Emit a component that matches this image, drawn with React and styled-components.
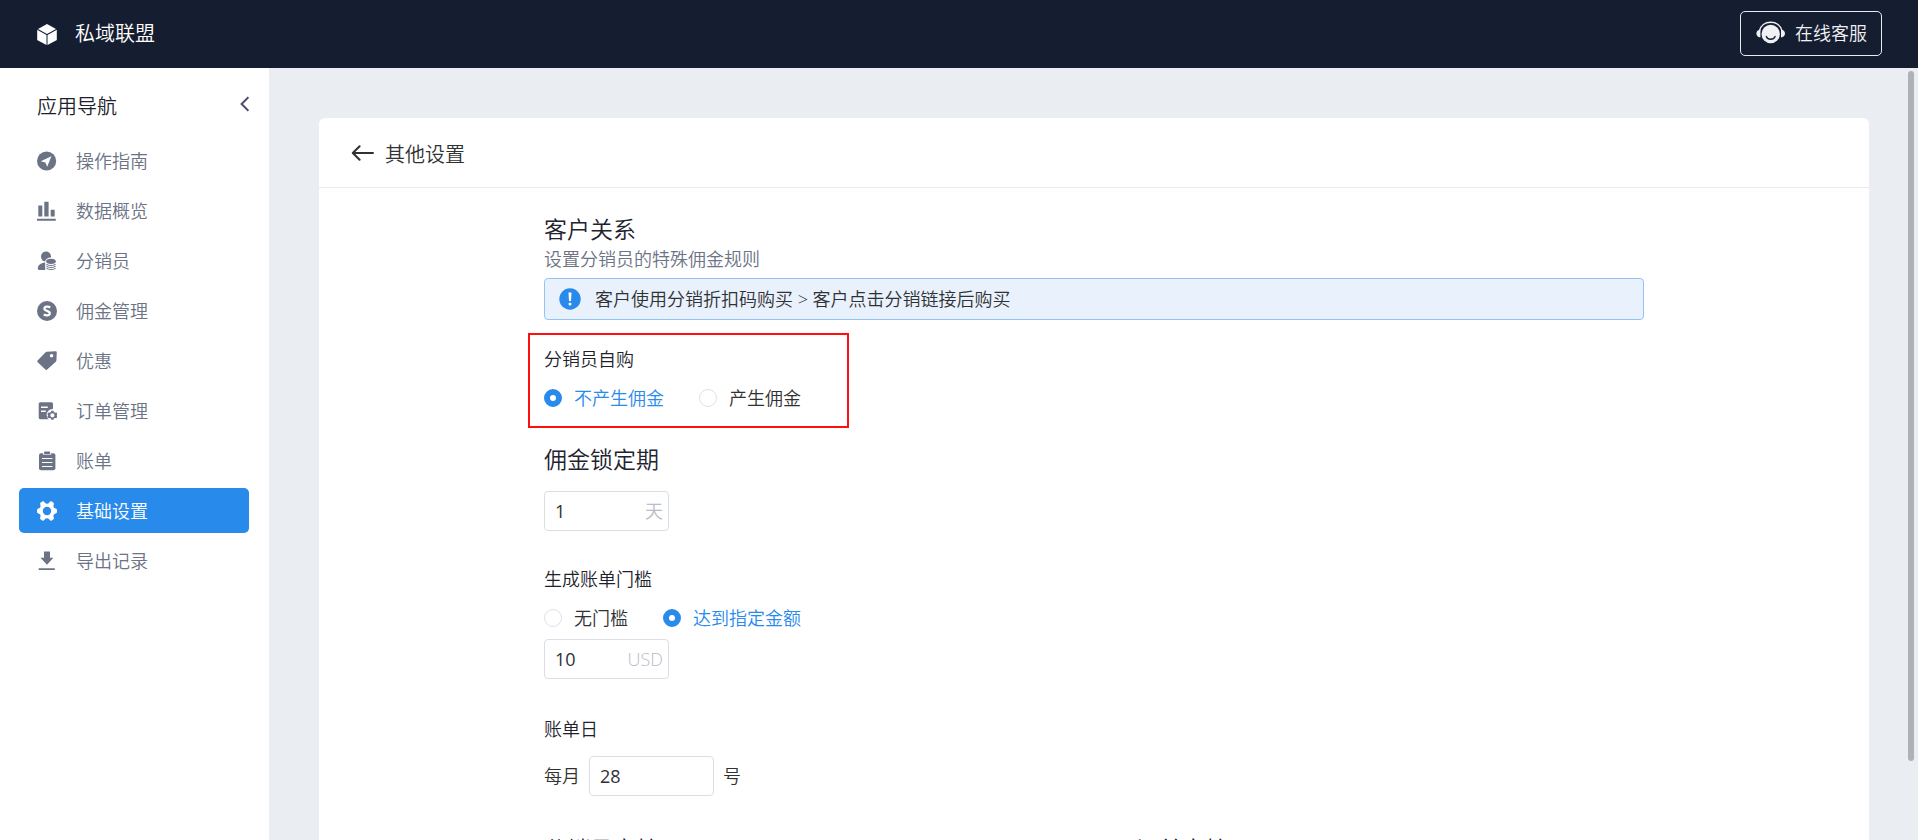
import { useState } from "react";
import styled, { createGlobalStyle } from "styled-components";

const GlobalStyle = createGlobalStyle`
    * {
        box-sizing: border-box;
    }
    body {
        margin: 0;
        font-family: "Open Sans", "Noto Sans CJK SC", sans-serif;
        font-size: 18px;
        font-weight: 350;
        line-height: 24px;
        color: #303133;
    }
    h1, h2, h3, p {
        margin: 0;
        font-weight: inherit;
    }
    button, input {
        font: inherit;
        color: inherit;
    }
`;

const Page = styled.div`
    display: flex;
    flex-direction: column;
    height: 100vh;
    overflow: hidden;
`;

const TopBar = styled.header`
    display: flex;
    justify-content: space-between;
    align-items: center;
    flex: none;
    height: 68px;
    padding: 0 36px 2px 37px;
    background: #151d30;
    color: white;
`;

const Brand = styled.div`
    display: flex;
    align-items: center;
    gap: 18px;
    padding-top: 2px;
    font-size: 20px;
    line-height: 28px;
`;

const ServiceButton = styled.button`
    display: flex;
    align-items: center;
    gap: 9px;
    height: 45px;
    padding: 0 14px 0 15px;
    background: transparent;
    border: 1px solid #e8eaee;
    border-radius: 5px;
    color: #f0f1f3;
`;

const Body = styled.div`
    display: flex;
    flex: 1;
    min-height: 0;
`;

const Sidebar = styled.aside`
    flex: none;
    width: 269px;
    padding: 22px 20px 0 19px;
    background: white;
`;

const SideHeader = styled.div`
    display: flex;
    justify-content: space-between;
    align-items: center;
    height: 34px;
    margin-bottom: 14px;
    padding-left: 18px;
    font-size: 20px;
    color: #1f1f2e;
`;

const CollapseButton = styled.button`
    display: flex;
    padding: 0 0 6px;
    background: none;
    border: 0;
`;

const NavList = styled.nav`
    display: flex;
    flex-direction: column;
    gap: 5px;
`;

const NavItem = styled.a`
    display: flex;
    align-items: center;
    gap: 19px;
    height: 45px;
    padding-left: 18px;
    border-radius: 5px;
    text-decoration: none;
    background: ${(props) => (props.$active ? "#288aeb" : "transparent")};
    color: ${(props) => (props.$active ? "white" : "#6b7385")};
`;

const Main = styled.main`
    position: relative;
    flex: 1;
    min-width: 0;
    background: #eaedf2;
`;

const Scroller = styled.div`
    height: 100%;
    padding: 50px 49px 50px 50px;
    overflow-y: auto;
    scrollbar-width: none;
`;

const ScrollThumb = styled.div`
    position: absolute;
    top: 3px;
    right: 4px;
    width: 6px;
    height: 89.4%;
    border-radius: 3px;
    background: #b0b1b5;
`;

const Card = styled.div`
    background: white;
    border-radius: 6px;
`;

const CardHeader = styled.div`
    display: flex;
    align-items: center;
    gap: 11px;
    height: 70px;
    padding: 4px 32px 0;
    border-bottom: 1px solid #e9ebee;
`;

const BackButton = styled.button`
    display: flex;
    padding: 0 0 4px;
    background: none;
    border: 0;
`;

const PageTitle = styled.h1`
    font-size: 20px;
`;

const Form = styled.form`
    max-width: 1100px;
    margin: 0 auto;
    padding: 26px 0 48px;
`;

const Title = styled.h2`
    padding-bottom: 2px;
    font-size: 23px;
    line-height: 30px;
    color: #222230;
`;

const Subtitle = styled.p`
    line-height: 26px;
    color: #6b7385;
`;

const Notice = styled.div`
    display: flex;
    align-items: center;
    gap: 14px;
    height: 42px;
    margin-top: 6px;
    padding-left: 14px;
    background: #e9f1fd;
    border: 1px solid #93c4f5;
    border-radius: 4px;
`;

const Section = styled.section`
    position: relative;
    display: flex;
    flex-direction: column;
    align-items: flex-start;
    gap: 15px;
    margin-top: ${(props) => props.$space || 36}px;
`;

const Highlight = styled.div`
    position: absolute;
    top: -14px;
    left: -16px;
    width: 321px;
    height: 95px;
    border: 2px solid #ff1010;
    pointer-events: none;
`;

const Label = styled.h3`
    font-size: 18px;
    color: #1f1f2e;
`;

const Stack = styled.div`
    display: flex;
    flex-direction: column;
    gap: 9px;
`;

const RadioGroup = styled.div`
    display: flex;
    gap: 35px;
`;

const RadioLabel = styled.label`
    display: flex;
    align-items: center;
    gap: 12px;
    color: ${(props) => (props.$checked ? "#288aeb" : "inherit")};
`;

const RadioInput = styled.input`
    appearance: none;
    width: 18px;
    height: 18px;
    margin: 0;
    border: 1px solid #dfe1e8;
    border-radius: 50%;
    background: white;

    &:checked {
        border: 6px solid #288aeb;
    }
`;

const InlineRow = styled.div`
    display: flex;
    align-items: center;
    gap: 9px;
`;

const InputBox = styled.label`
    display: flex;
    align-items: center;
    width: 125px;
    height: 40px;
    padding: 0 5px 0 10px;
    border: 1px solid #dcdde6;
    border-radius: 4px;
    color: #b9bdc6;
`;

const TextInput = styled.input`
    flex: 1;
    min-width: 0;
    padding: 0;
    border: 0;
    outline: none;
    background: transparent;
    color: #303133;
    font-weight: 400;
`;

const Columns = styled.div`
    display: grid;
    grid-template-columns: 1fr 1fr;
    gap: 84px;
    margin-top: 38px;
`;

const Icon = ({ width = 20, height = 20, children }) => (
    <svg width={width} height={height} viewBox={`0 0 ${width} ${height}`} fill="currentColor" aria-hidden="true">
        {children}
    </svg>
);

const CubeIcon = () => (
    <Icon height={21}>
        <path d="M10 0 19 5 10 10 1 5z" />
        <path d="M0.2 5.8 9.5 11V21L1 16.6Q0.2 16.2 0.2 15.4z" />
        <path d="M19.8 5.8 10.5 11V21L19 16.6Q19.8 16.2 19.8 15.4z" />
    </Icon>
);

const ServiceIcon = () => (
    <Icon width={30} height={24}>
        <circle cx="14.7" cy="13" r="9.2" />
        <path d="M3.4 10C4.6 4.4 9.2 1.2 14.7 1.2S24.8 4.4 26 10" fill="none" stroke="currentColor" strokeWidth="1.5" />
        <path d="M4.4 8.8V16.4C2 16.4 0.4 15 0.4 12.6S2 8.8 4.4 8.8zM25 8.8V16.4C27.4 16.4 29 15 29 12.6S27.4 8.8 25 8.8z" />
        <path d="M10.3 15.4C11.8 19.2 17.6 19.2 19.1 15.4" fill="none" stroke="#151d30" strokeWidth="1.3" strokeLinecap="round" />
    </Icon>
);

const GuideIcon = () => (
    <Icon>
        <circle cx="9.6" cy="10" r="9.6" />
        <path d="M14.4 5.2 3.8 10.3 8.4 11.4 10.2 15.8z" fill="white" />
    </Icon>
);

const ChartIcon = () => (
    <Icon>
        <path d="M1.3 4.5h4v11h-4zM7.3 0.8h4.3v14.7H7.3zM13.7 8.8h4v6.7h-4zM0 17.8h18.8v2H0z" />
    </Icon>
);

const UserIcon = () => (
    <Icon>
        <circle cx="9" cy="5.6" r="5" />
        <path d="M0.8 17.4C0.8 14 3.4 11.8 8.2 11.4V19H2Q0.8 18.8 0.8 17.4z" />
        <ellipse cx="14" cy="10.4" rx="5.8" ry="3.8" fill="white" />
        <ellipse cx="14" cy="10.3" rx="4.8" ry="2.6" />
        <path
            d="M9.4 13C11 15 17 15 18.6 13M9.4 15C11 17 17 17 18.6 15M9.4 17C11 19 17 19 18.6 17"
            fill="none"
            stroke="currentColor"
            strokeWidth="1.1"
        />
    </Icon>
);

const MoneyIcon = () => (
    <Icon>
        <circle cx="10" cy="10" r="10" />
        <path
            d="M13.2 6.6C11.6 5.2 7.4 5.2 7.4 7.8C7.4 10.4 12.8 9.4 12.8 12.2C12.8 14.8 8.6 14.8 6.8 13.3"
            fill="none"
            stroke="white"
            strokeWidth="2.2"
        />
    </Icon>
);

const TagIcon = () => (
    <Icon>
        <path
            d="M9.6 0.7 18.6 0.3Q19.8 0.3 19.8 1.5L19.4 9.6Q19.4 10.2 18.8 10.8L9.9 18.7Q9.1 19.3 8.4 18.6L0.5 11Q-0.1 10.3 0.6 9.6L8.6 1.2Q9 0.8 9.6 0.7zM14.6 3A1.8 1.8 0 1 0 14.6 6.6A1.8 1.8 0 1 0 14.6 3z"
            fillRule="evenodd"
        />
    </Icon>
);

const OrderIcon = () => (
    <Icon>
        <rect x="1.7" y="1.2" width="14.3" height="17" rx="1.6" />
        <path d="M4 5.6h6.8v1.4H4zM4 9.6h4.8V11H4z" fill="white" />
        <circle cx="15.4" cy="13.8" r="5.8" fill="white" />
        <path
            d="M14.4 9.8h2l0.5 1.3 1.2 0.6 1.4-0.2 1 1.6-0.9 1.2 0.9 1.2-1 1.6-1.4-0.2-1.2 0.6-0.5 1.3h-2l-0.5-1.3-1.2-0.6-1.4 0.2-1-1.6 0.9-1.2-0.9-1.2 1-1.6 1.4 0.2 1.2-0.6zM15.4 12.2A2.1 2.1 0 1 0 15.4 16.4A2.1 2.1 0 1 0 15.4 12.2z"
            fillRule="evenodd"
        />
    </Icon>
);

const BillIcon = () => (
    <Icon>
        <rect x="2" y="2.2" width="16.4" height="17" rx="2" />
        <rect x="6" y="0" width="8.2" height="3.6" fill="white" />
        <rect x="7" y="0.6" width="6.2" height="2.4" rx="0.8" />
        <path d="M5 7h10.4v1.1H5zM5 11h10.4v1.1H5zM5 15h10.4v1.1H5z" fill="white" />
    </Icon>
);

const SettingIcon = () => (
    <Icon>
        <path
            d="M5.2 0.6Q6.8 -0.2 7.7 1.5Q8.6 2.7 10 2.7T12.3 1.5Q13.2 -0.2 14.8 0.6L16.2 1.5Q17.4 2.4 16.6 4Q15.8 6.8 18.6 7.4Q20 7.6 20 9.2V10.8Q20 12.4 18.6 12.6Q15.8 13.2 16.6 16Q17.4 17.6 16.2 18.5L14.8 19.4Q13.2 20.2 12.3 18.5Q11.4 17.3 10 17.3T7.7 18.5Q6.8 20.2 5.2 19.4L3.8 18.5Q2.6 17.6 3.4 16Q4.2 13.2 1.4 12.6Q0 12.4 0 10.8V9.2Q0 7.6 1.4 7.4Q4.2 6.8 3.4 4Q2.6 2.4 3.8 1.5zM10 5.8A4.2 4.2 0 1 0 10 14.2A4.2 4.2 0 1 0 10 5.8z"
            fillRule="evenodd"
        />
    </Icon>
);

const ExportIcon = () => (
    <Icon>
        <path d="M7 0.5h6v6.3h3.4L10 13.8 3.4 6.8H7zM1.7 17.2h16.1v1.9H1.7z" />
    </Icon>
);

const navItems = [
    { name: "操作指南", icon: GuideIcon },
    { name: "数据概览", icon: ChartIcon },
    { name: "分销员", icon: UserIcon },
    { name: "佣金管理", icon: MoneyIcon },
    { name: "优惠", icon: TagIcon },
    { name: "订单管理", icon: OrderIcon },
    { name: "账单", icon: BillIcon },
    { name: "基础设置", icon: SettingIcon },
    { name: "导出记录", icon: ExportIcon },
];

function Radios({ name, label, options, value, onChange }) {
    return (
        <RadioGroup role="radiogroup" aria-label={label}>
            {options.map((option) => (
                <RadioLabel key={option} $checked={option === value}>
                    <RadioInput
                        type="radio"
                        name={name}
                        checked={option === value}
                        onChange={() => onChange(option)}
                    />
                    {option}
                </RadioLabel>
            ))}
        </RadioGroup>
    );
}

function NumberBox({ label, unit, defaultValue }) {
    return (
        <InputBox>
            <TextInput type="text" inputMode="numeric" aria-label={label} defaultValue={defaultValue} />
            {unit}
        </InputBox>
    );
}

function App() {
    const [active, setActive] = useState("基础设置");
    const [selfBuy, setSelfBuy] = useState("不产生佣金");
    const [threshold, setThreshold] = useState("达到指定金额");

    return (
        <Page>
            <GlobalStyle />
            <TopBar>
                <Brand>
                    <CubeIcon />
                    私域联盟
                </Brand>
                <ServiceButton type="button">
                    <ServiceIcon />
                    在线客服
                </ServiceButton>
            </TopBar>
            <Body>
                <Sidebar>
                    <SideHeader>
                        应用导航
                        <CollapseButton type="button" aria-label="收起">
                            <Icon width={9} height={16}>
                                <path d="M8.4 1.2 1.6 8l6.8 6.8" fill="none" stroke="#4f4b70" strokeWidth="2" />
                            </Icon>
                        </CollapseButton>
                    </SideHeader>
                    <NavList>
                        {navItems.map(({ name, icon: ItemIcon }) => (
                            <NavItem key={name} href="#" $active={name === active} onClick={() => setActive(name)}>
                                <ItemIcon />
                                {name}
                            </NavItem>
                        ))}
                    </NavList>
                </Sidebar>
                <Main>
                    <Scroller>
                        <Card>
                            <CardHeader>
                                <BackButton type="button" aria-label="返回">
                                    <Icon width={23} height={16}>
                                        <path
                                            d="M8.6 1.2 1.8 8l6.8 6.8M2 8h20"
                                            fill="none"
                                            stroke="#303133"
                                            strokeWidth="2"
                                            strokeLinecap="round"
                                            strokeLinejoin="round"
                                        />
                                    </Icon>
                                </BackButton>
                                <PageTitle>其他设置</PageTitle>
                            </CardHeader>
                            <Form>
                                <Title>客户关系</Title>
                                <Subtitle>设置分销员的特殊佣金规则</Subtitle>
                                <Notice>
                                    <Icon width={22} height={22}>
                                        <circle cx="11" cy="11" r="10.7" fill="#288aeb" />
                                        <path d="M9.5 4.6h3l-.5 8.4h-2z" fill="white" />
                                        <circle cx="11" cy="16" r="1.5" fill="white" />
                                    </Icon>
                                    客户使用分销折扣码购买 &gt; 客户点击分销链接后购买
                                </Notice>
                                <Section $space={27}>
                                    <Highlight />
                                    <Label>分销员自购</Label>
                                    <Radios
                                        name="selfBuy"
                                        label="分销员自购"
                                        options={["不产生佣金", "产生佣金"]}
                                        value={selfBuy}
                                        onChange={setSelfBuy}
                                    />
                                </Section>
                                <Section $space={34}>
                                    <Title>佣金锁定期</Title>
                                    <NumberBox label="佣金锁定期" unit="天" defaultValue="1" />
                                </Section>
                                <Section>
                                    <Label>生成账单门槛</Label>
                                    <Stack>
                                        <Radios
                                            name="threshold"
                                            label="生成账单门槛"
                                            options={["无门槛", "达到指定金额"]}
                                            value={threshold}
                                            onChange={setThreshold}
                                        />
                                        <NumberBox label="指定金额" unit="USD" defaultValue="10" />
                                    </Stack>
                                </Section>
                                <Section $space={38}>
                                    <Label>账单日</Label>
                                    <InlineRow>
                                        每月
                                        <NumberBox label="账单日" defaultValue="28" />
                                        号
                                    </InlineRow>
                                </Section>
                                <Columns>
                                    <Title>分销员审核</Title>
                                    <Title>订单审核</Title>
                                </Columns>
                            </Form>
                        </Card>
                    </Scroller>
                    <ScrollThumb />
                </Main>
            </Body>
        </Page>
    );
}

export default App;
